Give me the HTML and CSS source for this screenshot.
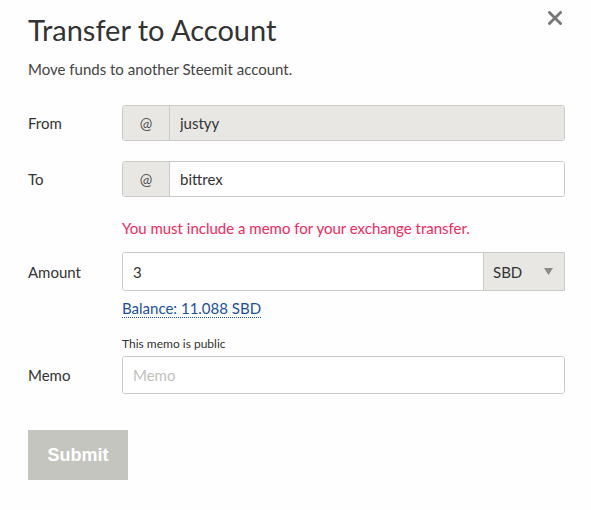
FILE: index.html
```html
<!DOCTYPE html>
<html lang="en">
<head>
<meta charset="utf-8">
<title>Transfer to Account</title>
<link rel="stylesheet" href="styles.css">
</head>
<body>
<div class="modal">
  <div class="header">
    <h1 class="title">Transfer to Account</h1>
    <button class="close" type="button" aria-label="Close">
      <svg width="14" height="14" viewBox="0 0 14 14"><path d="M1.5 1.5 L12.5 12.5 M12.5 1.5 L1.5 12.5" stroke="#777" stroke-width="2.8" stroke-linecap="square" fill="none"/></svg>
    </button>
  </div>
  <p class="subtitle">Move funds to another Steemit account.</p>

  <form class="form">
    <div class="row row-from">
      <div class="label">From</div>
      <div class="group">
        <span class="addon">@</span>
        <input class="input input-disabled" type="text" value="justyy" disabled>
      </div>
    </div>

    <div class="row row-to">
      <div class="label">To</div>
      <div class="group">
        <span class="addon">@</span>
        <input class="input" type="text" value="bittrex">
      </div>
    </div>

    <div class="row row-error">
      <div class="label"></div>
      <div class="error">You must include a memo for your exchange transfer.</div>
    </div>

    <div class="row row-amount">
      <div class="label">Amount</div>
      <div class="group group-amount">
        <input class="input" type="text" value="3">
        <div class="select">
          <span>SBD</span>
          <svg width="9" height="7" viewBox="0 0 9 7"><path d="M0 0 H9 L4.5 7 Z" fill="#8a8a86"/></svg>
        </div>
      </div>
    </div>

    <div class="row row-balance">
      <div class="label"></div>
      <div><a class="balance" href="#">Balance: 11.088 SBD</a></div>
    </div>

    <div class="row row-note">
      <div class="label"></div>
      <div class="note">This memo is public</div>
    </div>

    <div class="row row-memo">
      <div class="label">Memo</div>
      <div class="group group-memo">
        <input class="input input-memo" type="text" placeholder="Memo">
      </div>
    </div>

    <div class="actions">
      <button class="submit" type="button" disabled>Submit</button>
    </div>
  </form>
</div>
</body>
</html>
```

FILE: styles.css
```css
* { box-sizing: border-box; }

html, body {
  margin: 0;
  padding: 0;
  background: #fefefe;
}

body {
  font-family: Lato, "Open Sans", sans-serif;
  color: #333;
}

.modal {
  width: 591px;
  padding: 12px 26px 0 28px;
}

.header {
  display: flex;
  justify-content: space-between;
  align-items: flex-start;
}

.title {
  margin: 0;
  font-size: 29px;
  font-weight: 400;
  line-height: 36px;
  color: #333;
}

.close {
  border: 0;
  background: none;
  padding: 0;
  margin: -2px 2px 0 0;
  width: 16px;
  height: 16px;
  display: flex;
  align-items: center;
  justify-content: center;
  cursor: pointer;
}

.subtitle {
  margin: 11px 0 0;
  font-size: 15px;
  line-height: 20px;
  color: #444;
}

.form {
  margin-top: 26px;
}

.row {
  display: grid;
  grid-template-columns: 94px 1fr;
  align-items: center;
}

.label {
  font-size: 15px;
  color: #333;
}

.group {
  display: flex;
  height: 36px;
  border: 1px solid #cacac6;
  border-radius: 3px;
  overflow: hidden;
  background: #fff;
}

.addon {
  width: 47px;
  flex: none;
  display: flex;
  align-items: center;
  justify-content: center;
  background: #e8e7e4;
  border-right: 1px solid #cacac6;
  font-size: 15px;
  color: #555;
}

.input {
  flex: 1;
  min-width: 0;
  border: 0;
  outline: none;
  padding: 0 10px;
  font-family: inherit;
  font-size: 15px;
  color: #333;
  background: #fff;
}

.input-disabled {
  background: #e8e7e4;
  color: #333;
  -webkit-text-fill-color: #333;
  opacity: 1;
}

.row-to {
  margin-top: 20px;
}

.row-error {
  margin-top: 21px;
}

.error {
  font-size: 15px;
  line-height: 20px;
  color: #f2285e;
}

.row-amount {
  margin-top: 14px;
}

.group-amount {
  height: 39px;
  border-radius: 3px 0 0 3px;
}

.select {
  width: 81px;
  flex: none;
  display: flex;
  align-items: center;
  justify-content: space-between;
  padding: 0 11px 0 9px;
  background: #e8e7e4;
  border-left: 1px solid #cacac6;
  font-size: 15px;
  color: #333;
}

.row-balance {
  margin-top: 7px;
}

.balance {
  font-size: 15px;
  line-height: 20px;
  color: #1a5099;
  text-decoration: none;
  border-bottom: 1px dotted #1a5099;
}

.row-note {
  margin-top: 18px;
}

.note {
  font-size: 12px;
  line-height: 16px;
  color: #333;
}

.row-memo {
  margin-top: 4px;
}

.input-memo::placeholder {
  color: #c2c2bd;
}

.group-memo {
  height: 38px;
}

.actions {
  margin-top: 36px;
}

.submit {
  width: 100px;
  height: 50px;
  border: 0;
  border-radius: 0;
  background: #c5c5c0;
  color: #fff;
  font-family: "Liberation Sans", Arial, sans-serif;
  font-weight: 700;
  font-size: 18px;
  padding: 0;
}
```
